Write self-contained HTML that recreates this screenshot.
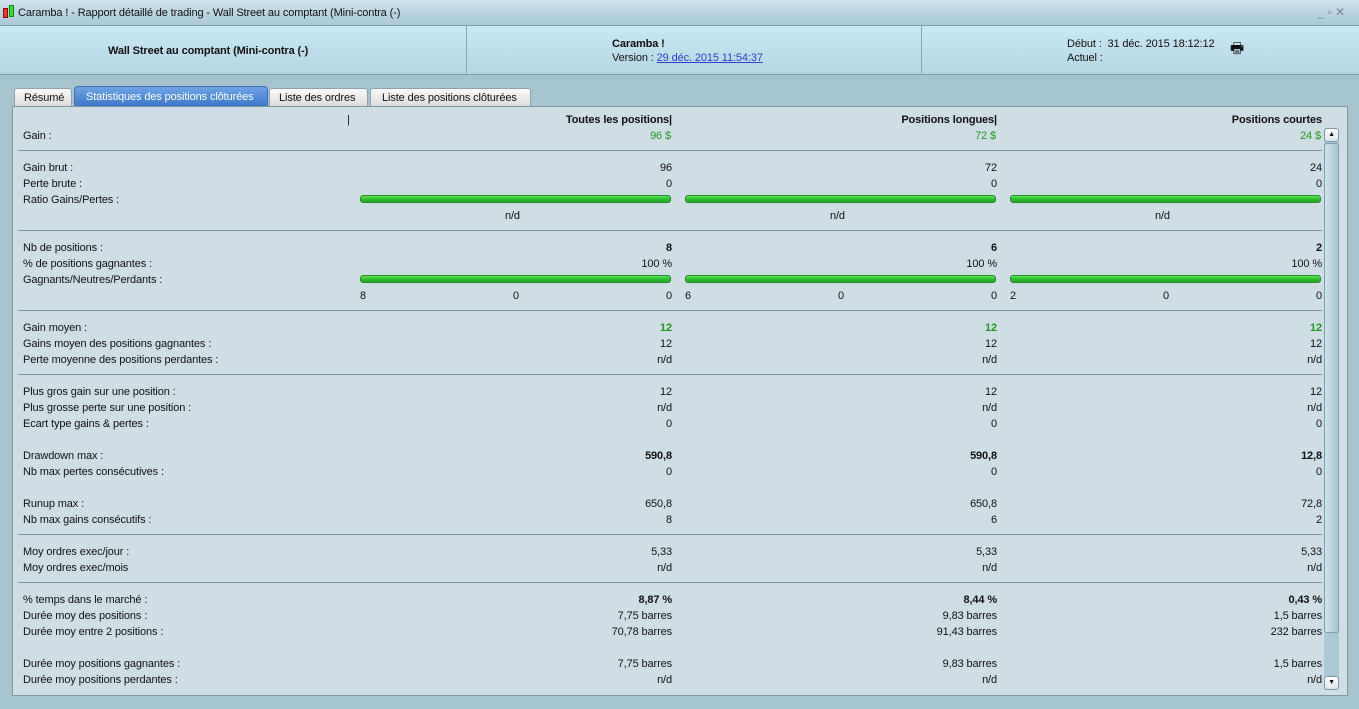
<!DOCTYPE html><html><head><meta charset="utf-8"><style>
*{margin:0;padding:0;box-sizing:border-box}
body{width:1359px;height:709px;overflow:hidden;background:#a6c3d0;font-family:"Liberation Sans",sans-serif;font-size:11px;letter-spacing:-0.12px;color:#111;position:relative}
.a{position:absolute;white-space:nowrap;line-height:14px}
.r{text-align:right}
.b{font-weight:bold}
.g{color:#1f9a1f}
.hl{position:absolute;left:18px;width:1304px;height:1px;background:#7e98a4}
.bar{position:absolute;height:8px;width:311px;background:linear-gradient(#5fe05f,#2cc02c 50%,#22a622);border:1px solid #2b8a2b;border-radius:3px}
</style></head><body>
<div class="a" style="left:0;top:0;width:1359px;height:26px;background:linear-gradient(#cfe3ee,#a9c8d6);border-bottom:1px solid #7f9eab"></div>
<div class="a" style="left:3px;top:8px;width:5px;height:10px;background:#e33;border:1px solid #900"></div>
<div class="a" style="left:9px;top:5px;width:5px;height:12px;background:#3d3;border:1px solid #080"></div>
<div class="a" style="left:18px;top:6px;font-size:11px">Caramba ! - Rapport détaillé de trading - Wall Street au comptant (Mini-contra (-)</div>
<div class="a" style="left:1318px;top:5px;color:#789;font-size:12px">_ ▫ ✕</div>
<div class="a" style="left:0;top:26px;width:1359px;height:49px;background:linear-gradient(#cbe8f5,#b4d6e4);border-bottom:1px solid #7f9eab"></div>
<div class="a" style="left:466px;top:26px;width:1px;height:48px;background:#8aa6b2"></div>
<div class="a" style="left:921px;top:26px;width:1px;height:48px;background:#8aa6b2"></div>
<div class="a b" style="left:108px;top:44px">Wall Street au comptant (Mini-contra (-)</div>
<div class="a b" style="left:612px;top:37px">Caramba !</div>
<div class="a" style="left:612px;top:51px">Version : <span style="color:#2a3fd0;text-decoration:underline">29 déc. 2015 11:54:37</span></div>
<div class="a" style="left:1067px;top:37px">Début :&nbsp;&nbsp;31 déc. 2015 18:12:12</div>
<div class="a" style="left:1067px;top:51px">Actuel :</div>
<div class="a" style="left:1230px;top:42px;font-size:15px">🖶</div>
<div class="a" style="left:14px;top:88px;width:58px;height:18px;background:linear-gradient(#fafafa,#dcdcdc);border:1px solid #8ea3ad;border-bottom:none;border-radius:3px 3px 0 0;padding:2px 0 0 9px">Résumé</div>
<div class="a" style="left:74px;top:86px;width:194px;height:20px;background:linear-gradient(#6fa3e4,#3f78cc);border:1px solid #3d6eb6;border-bottom:none;border-radius:4px 4px 0 0;color:#fff;padding:3px 0 0 11px">Statistiques des positions clôturées</div>
<div class="a" style="left:269px;top:88px;width:99px;height:18px;background:linear-gradient(#fafafa,#dcdcdc);border:1px solid #8ea3ad;border-bottom:none;border-radius:3px 3px 0 0;padding:2px 0 0 9px">Liste des ordres</div>
<div class="a" style="left:370px;top:88px;width:161px;height:18px;background:linear-gradient(#fafafa,#dcdcdc);border:1px solid #8ea3ad;border-bottom:none;border-radius:3px 3px 0 0;padding:2px 0 0 11px">Liste des positions clôturées</div>
<div class="a" style="left:12px;top:106px;width:1336px;height:590px;background:#cfdde4;border:1px solid #7d97a3"></div>
<div class="a" style="left:1324px;top:128px;width:15px;height:562px;background:#a9c9d6;border-radius:3px"></div>
<div class="a" style="left:1324px;top:128px;width:15px;height:14px;background:linear-gradient(#fff,#dde6ea);border:1px solid #7d97a3;border-radius:3px;font-size:7px;text-align:center;line-height:12px">▲</div>
<div class="a" style="left:1324px;top:143px;width:15px;height:490px;background:linear-gradient(90deg,#cfe3ec,#a7c6d3);border:1px solid #7f9dab;border-radius:3px"></div>
<div class="a" style="left:1324px;top:676px;width:15px;height:14px;background:linear-gradient(#fff,#dde6ea);border:1px solid #7d97a3;border-radius:3px;font-size:7px;text-align:center;line-height:12px">▼</div>
<div id="c"></div>
<script>
var h='';
function t(x,y,s,c){h+='<div class="a '+(c||'')+'" style="left:'+x+'px;top:'+(y-6)+'px">'+s+'</div>';}
function rt(x,y,s,c){h+='<div class="a r '+(c||'')+'" style="left:'+(x-200)+'px;width:200px;top:'+(y-6)+'px">'+s+'</div>';}
var R=[672,997,1322];
t(347,119,'|');
rt(672,119,'Toutes les positions|','b');rt(997,119,'Positions longues|','b');rt(1322,119,'Positions courtes','b');
var rows=[
[135,'Gain :',['96 $','72 $','24 $'],'g'],
[167,'Gain brut :',['96','72','24']],
[183,'Perte brute :',['0','0','0']],
[199,'Ratio Gains/Pertes :',null],
[247,'Nb de positions :',['8','6','2'],'b'],
[263,'% de positions gagnantes :',['100 %','100 %','100 %']],
[279,'Gagnants/Neutres/Perdants :',null],
[327,'Gain moyen :',['12','12','12'],'b g'],
[343,'Gains moyen des positions gagnantes :',['12','12','12']],
[359,'Perte moyenne des positions perdantes :',['n/d','n/d','n/d']],
[391,'Plus gros gain sur une position :',['12','12','12']],
[407,'Plus grosse perte sur une position :',['n/d','n/d','n/d']],
[423,'Ecart type gains &amp; pertes :',['0','0','0']],
[455,'Drawdown max :',['590,8','590,8','12,8'],'b'],
[471,'Nb max pertes consécutives :',['0','0','0']],
[503,'Runup max :',['650,8','650,8','72,8']],
[519,'Nb max gains consécutifs :',['8','6','2']],
[551,'Moy ordres exec/jour :',['5,33','5,33','5,33']],
[567,'Moy ordres exec/mois',['n/d','n/d','n/d']],
[599,'% temps dans le marché :',['8,87 %','8,44 %','0,43 %'],'b'],
[615,'Durée moy des positions :',['7,75 barres','9,83 barres','1,5 barres']],
[631,'Durée moy entre 2 positions :',['70,78 barres','91,43 barres','232 barres']],
[663,'Durée moy positions gagnantes :',['7,75 barres','9,83 barres','1,5 barres']],
[679,'Durée moy positions perdantes :',['n/d','n/d','n/d']]];
rows.forEach(function(r){t(23,r[0],r[1]);if(r[2])for(var i=0;i<3;i++)rt(R[i]+(r[0]==135?-1:0),r[0],r[2][i],r[3]);});
[150,230,310,374,534,582].forEach(function(y){h+='<div class="hl" style="top:'+y+'px"></div>';});
for(var i=0;i<3;i++){var x=R[i]-312;
h+='<div class="bar" style="left:'+x+'px;top:195px"></div>';
h+='<div class="bar" style="left:'+x+'px;top:275px"></div>';
t(R[i]-167,215,'n/d');
t(x,295,['8','6','2'][i]);t(R[i]-159,295,'0');rt(R[i],295,'0');}
document.getElementById('c').innerHTML=h;
</script>
</body></html>
